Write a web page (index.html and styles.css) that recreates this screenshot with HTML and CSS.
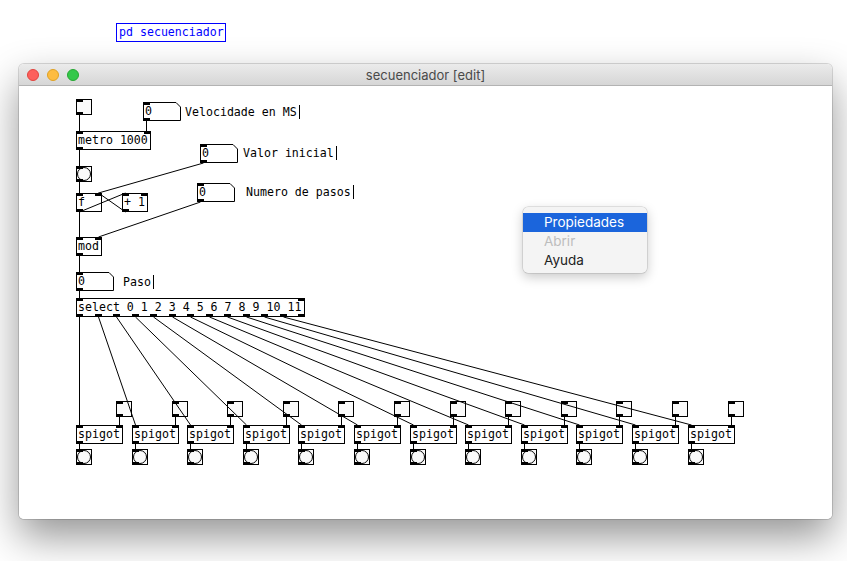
FILE: index.html
```html
<!DOCTYPE html>
<html>
<head>
<meta charset="utf-8">
<title>secuenciador</title>
<link rel="stylesheet" href="styles.css">
</head>
<body>
<div class="top-row"><span class="pd-box">pd secuenciador</span></div>
<div class="window">
  <div class="titlebar">
    <div class="lights"><span class="light red"></span><span class="light yellow"></span><span class="light green"></span></div>
    <div class="title">secuenciador [edit]</div>
    <div></div>
  </div>
  <div class="canvas">
    <div class="layer">
      <!-- top section -->
      <div class="obj tgl" style="left:76px;top:99px"><span class="in l"></span><span class="out l"></span></div>
      <div class="atom" style="left:143px;top:102px"><svg class="atom-shape" width="38" height="19"><path d="M0.5 0.5H33L37.5 5V18.5H0.5Z"/></svg><span class="in l"></span><span class="out l"></span><span class="val">0</span></div>
      <div class="cmt" style="left:185px;top:105px">Velocidade en MS</div>

      <div class="obj box" style="left:76px;top:131px;width:75px">metro 1000<span class="in l"></span><span class="in r"></span><span class="out l"></span></div>

      <div class="atom" style="left:200px;top:144px"><svg class="atom-shape" width="38" height="19"><path d="M0.5 0.5H33L37.5 5V18.5H0.5Z"/></svg><span class="in l"></span><span class="out l"></span><span class="val">0</span></div>
      <div class="cmt" style="left:243px;top:146px">Valor inicial</div>

      <div class="obj bng" style="left:76px;top:166px"><span class="in l"></span><span class="out l"></span></div>

      <div class="obj box" style="left:76px;top:193px;width:26px">f<span class="in l"></span><span class="in r"></span><span class="out l"></span></div>
      <div class="obj box" style="left:122px;top:193px;width:26px">+ 1<span class="in l"></span><span class="in r"></span><span class="out l"></span></div>

      <div class="atom" style="left:197px;top:183px"><svg class="atom-shape" width="38" height="19"><path d="M0.5 0.5H33L37.5 5V18.5H0.5Z"/></svg><span class="in l"></span><span class="out l"></span><span class="val">0</span></div>
      <div class="cmt" style="left:246px;top:185px">Numero de pasos</div>

      <div class="obj box" style="left:76px;top:237px;width:26px">mod<span class="in l"></span><span class="in r"></span><span class="out l"></span></div>

      <div class="atom" style="left:76px;top:272px"><svg class="atom-shape" width="38" height="19"><path d="M0.5 0.5H33L37.5 5V18.5H0.5Z"/></svg><span class="in l"></span><span class="out l"></span><span class="val">0</span></div>
      <div class="cmt" style="left:123px;top:275px">Paso</div>

      <div class="obj box" style="left:76px;top:298px;width:229px">select 0 1 2 3 4 5 6 7 8 9 10 11<span class="in l"></span><span class="in r"></span>
        <span class="out" style="left:-1px"></span><span class="out" style="left:18px"></span><span class="out" style="left:36px"></span><span class="out" style="left:55px"></span><span class="out" style="left:73px"></span><span class="out" style="left:92px"></span><span class="out" style="left:110px"></span><span class="out" style="left:129px"></span><span class="out" style="left:147px"></span><span class="out" style="left:166px"></span><span class="out" style="left:184px"></span><span class="out" style="left:203px"></span><span class="out" style="left:221px"></span>
      </div>

      <!-- toggles row -->
      <div class="obj tgl" style="left:116px;top:401px"><span class="in l"></span><span class="out l"></span></div>
      <div class="obj tgl" style="left:172px;top:401px"><span class="in l"></span><span class="out l"></span></div>
      <div class="obj tgl" style="left:227px;top:401px"><span class="in l"></span><span class="out l"></span></div>
      <div class="obj tgl" style="left:283px;top:401px"><span class="in l"></span><span class="out l"></span></div>
      <div class="obj tgl" style="left:338px;top:401px"><span class="in l"></span><span class="out l"></span></div>
      <div class="obj tgl" style="left:394px;top:401px"><span class="in l"></span><span class="out l"></span></div>
      <div class="obj tgl" style="left:450px;top:401px"><span class="in l"></span><span class="out l"></span></div>
      <div class="obj tgl" style="left:505px;top:401px"><span class="in l"></span><span class="out l"></span></div>
      <div class="obj tgl" style="left:561px;top:401px"><span class="in l"></span><span class="out l"></span></div>
      <div class="obj tgl" style="left:616px;top:401px"><span class="in l"></span><span class="out l"></span></div>
      <div class="obj tgl" style="left:672px;top:401px"><span class="in l"></span><span class="out l"></span></div>
      <div class="obj tgl" style="left:728px;top:401px"><span class="in l"></span><span class="out l"></span></div>

      <!-- spigots -->
      <div class="obj box spigot" style="left:76px;top:425px">spigot<span class="in l"></span><span class="in r"></span><span class="out l"></span></div>
      <div class="obj box spigot" style="left:132px;top:425px">spigot<span class="in l"></span><span class="in r"></span><span class="out l"></span></div>
      <div class="obj box spigot" style="left:187px;top:425px">spigot<span class="in l"></span><span class="in r"></span><span class="out l"></span></div>
      <div class="obj box spigot" style="left:243px;top:425px">spigot<span class="in l"></span><span class="in r"></span><span class="out l"></span></div>
      <div class="obj box spigot" style="left:298px;top:425px">spigot<span class="in l"></span><span class="in r"></span><span class="out l"></span></div>
      <div class="obj box spigot" style="left:354px;top:425px">spigot<span class="in l"></span><span class="in r"></span><span class="out l"></span></div>
      <div class="obj box spigot" style="left:410px;top:425px">spigot<span class="in l"></span><span class="in r"></span><span class="out l"></span></div>
      <div class="obj box spigot" style="left:465px;top:425px">spigot<span class="in l"></span><span class="in r"></span><span class="out l"></span></div>
      <div class="obj box spigot" style="left:521px;top:425px">spigot<span class="in l"></span><span class="in r"></span><span class="out l"></span></div>
      <div class="obj box spigot" style="left:576px;top:425px">spigot<span class="in l"></span><span class="in r"></span><span class="out l"></span></div>
      <div class="obj box spigot" style="left:632px;top:425px">spigot<span class="in l"></span><span class="in r"></span><span class="out l"></span></div>
      <div class="obj box spigot" style="left:688px;top:425px">spigot<span class="in l"></span><span class="in r"></span><span class="out l"></span></div>

      <!-- bangs -->
      <div class="obj bng" style="left:76px;top:449px"><span class="in l"></span><span class="out l"></span></div>
      <div class="obj bng" style="left:132px;top:449px"><span class="in l"></span><span class="out l"></span></div>
      <div class="obj bng" style="left:187px;top:449px"><span class="in l"></span><span class="out l"></span></div>
      <div class="obj bng" style="left:243px;top:449px"><span class="in l"></span><span class="out l"></span></div>
      <div class="obj bng" style="left:298px;top:449px"><span class="in l"></span><span class="out l"></span></div>
      <div class="obj bng" style="left:354px;top:449px"><span class="in l"></span><span class="out l"></span></div>
      <div class="obj bng" style="left:410px;top:449px"><span class="in l"></span><span class="out l"></span></div>
      <div class="obj bng" style="left:465px;top:449px"><span class="in l"></span><span class="out l"></span></div>
      <div class="obj bng" style="left:521px;top:449px"><span class="in l"></span><span class="out l"></span></div>
      <div class="obj bng" style="left:576px;top:449px"><span class="in l"></span><span class="out l"></span></div>
      <div class="obj bng" style="left:632px;top:449px"><span class="in l"></span><span class="out l"></span></div>
      <div class="obj bng" style="left:688px;top:449px"><span class="in l"></span><span class="out l"></span></div>

      <svg class="wires" width="847" height="561" viewBox="0 0 847 561">
        <path d="M79.5 115V131"/>
        <path d="M146.5 121V131"/>
        <path d="M79.5 150V166"/>
        <path d="M79.5 182V193"/>
        <path d="M203.5 163L98.5 193"/>
        <path d="M79.5 212L125.5 193"/>
        <path d="M125.5 212L98.5 193"/>
        <path d="M79.5 212V237"/>
        <path d="M200.5 202L98.5 237"/>
        <path d="M79.5 256V272"/>
        <path d="M79.5 291V298"/>
        <path d="M79.5 317V425"/>
        <path d="M98.5 317L135.5 425"/>
        <path d="M116.5 317L190.5 425"/>
        <path d="M135.5 317L246.5 425"/>
        <path d="M153.5 317L301.5 425"/>
        <path d="M172.5 317L357.5 425"/>
        <path d="M190.5 317L413.5 425"/>
        <path d="M209.5 317L468.5 425"/>
        <path d="M227.5 317L524.5 425"/>
        <path d="M246.5 317L579.5 425"/>
        <path d="M264.5 317L635.5 425"/>
        <path d="M283.5 317L691.5 425"/>
        <path d="M119.5 417V425M175.5 417V425M230.5 417V425M286.5 417V425M341.5 417V425M397.5 417V425M453.5 417V425M508.5 417V425M564.5 417V425M619.5 417V425M675.5 417V425M731.5 417V425"/>
        <path d="M79.5 444V449M135.5 444V449M190.5 444V449M246.5 444V449M301.5 444V449M357.5 444V449M413.5 444V449M468.5 444V449M524.5 444V449M579.5 444V449M635.5 444V449M691.5 444V449"/>
      </svg>

      <div class="menu">
        <div class="item sel">Propiedades</div>
        <div class="item dis">Abrir</div>
        <div class="item">Ayuda</div>
      </div>
    </div>
  </div>
</div>
</body>
</html>
```
FILE: styles.css
```css
html, body {
  margin: 0;
  padding: 0;
  background: #ffffff;
}
body {
  width: 847px;
  height: 561px;
  overflow: hidden;
}
.top-row {
  padding: 22px 0 0 116px;
  height: 19px;
}
.pd-box {
  display: inline-block;
  box-sizing: border-box;
  height: 19px;
  width: 110px;
  border: 1px solid #0000ff;
  color: #0000ff;
  font: 11.6px/17px "DejaVu Sans Mono", monospace;
  padding-left: 2px;
  white-space: nowrap;
}
.window {
  margin: 23px 0 0 19px;
  width: 813px;
  height: 455px;
  border-radius: 5px;
  overflow: hidden;
  box-shadow: 0 0 0 1px rgba(0,0,0,0.14), 0 18px 40px rgba(0,0,0,0.42);
  background: #fff;
  position: relative;
}
.titlebar {
  height: 21px;
  border-bottom: 1px solid #b3b3b3;
  background: linear-gradient(#ebebeb, #d6d6d6);
  display: grid;
  grid-template-columns: 1fr auto 1fr;
  align-items: center;
}
.lights {
  display: flex;
  gap: 8px;
  padding-left: 8px;
}
.light {
  width: 12px;
  height: 12px;
  border-radius: 50%;
  box-sizing: border-box;
}
.red { background: #fc605c; border: 1px solid #e0443e; }
.yellow { background: #fdbc40; border: 1px solid #dea123; }
.green { background: #34c84a; border: 1px solid #25a732; }
.title {
  font: 13px "Inter", "Liberation Sans", sans-serif;
  color: #4a4a4a;
  padding-top: 1px;
}
.canvas {
  position: relative;
  height: 433px;
  background: #fff;
  overflow: hidden;
}
.layer {
  position: absolute;
  left: -19px;
  top: -86px;
  width: 847px;
  height: 561px;
}
.obj {
  position: absolute;
  box-sizing: border-box;
  border: 1px solid #000;
  background: #fff;
}
.box {
  height: 19px;
  font: 11.6px/17px "DejaVu Sans Mono", monospace;
  color: #000;
  padding-left: 1px;
  white-space: nowrap;
}
.spigot { width: 47px; }
.tgl {
  width: 16px;
  height: 16px;
  background: #fafafa;
}
.bng {
  width: 16px;
  height: 16px;
  background: #fafafa;
  display: flex;
  align-items: center;
  justify-content: center;
}
.bng::before {
  content: "";
  width: 12px;
  height: 12px;
  border: 1px solid #000;
  border-radius: 50%;
}
.in, .out {
  position: absolute;
  width: 7px;
  height: 3px;
  background: #000;
}
.in { top: -1px; }
.out { bottom: -1px; }
.l { left: -1px; }
.r { right: -1px; }
.atom {
  position: absolute;
  width: 38px;
  height: 19px;
  box-sizing: border-box;
  font: 11.6px/19px "DejaVu Sans Mono", monospace;
  color: #000;
}
.atom .in { top: 0; left: 0; }
.atom .out { bottom: 0; left: 0; }
.atom-shape {
  position: absolute;
  left: 0;
  top: 0;
}
.atom-shape path {
  fill: #fff;
  stroke: #000;
  stroke-width: 1;
}
.val {
  position: relative;
  padding-left: 2px;
}
.cmt {
  position: absolute;
  font: 11.6px/14px "DejaVu Sans Mono", monospace;
  color: #000;
  padding-right: 2px;
  border-right: 1px solid #000;
  white-space: nowrap;
}
.wires {
  position: absolute;
  left: 0;
  top: 0;
  pointer-events: none;
}
.wires path {
  stroke: #000;
  stroke-width: 1;
  fill: none;
}
.menu {
  position: absolute;
  left: 523px;
  top: 207px;
  width: 124px;
  padding: 6px 0 3px;
  background: #f4f4f4;
  border-radius: 5px;
  box-shadow: 0 0 0 0.5px rgba(0,0,0,0.18), 0 4px 12px rgba(0,0,0,0.22);
  font: 13.5px "Inter", "Liberation Sans", sans-serif;
  color: #222;
}
.item {
  height: 19px;
  line-height: 19px;
  padding-left: 21px;
}
.item.sel {
  background: #1b65dc;
  color: #fff;
}
.item.dis {
  color: #bdbdbd;
}
```
